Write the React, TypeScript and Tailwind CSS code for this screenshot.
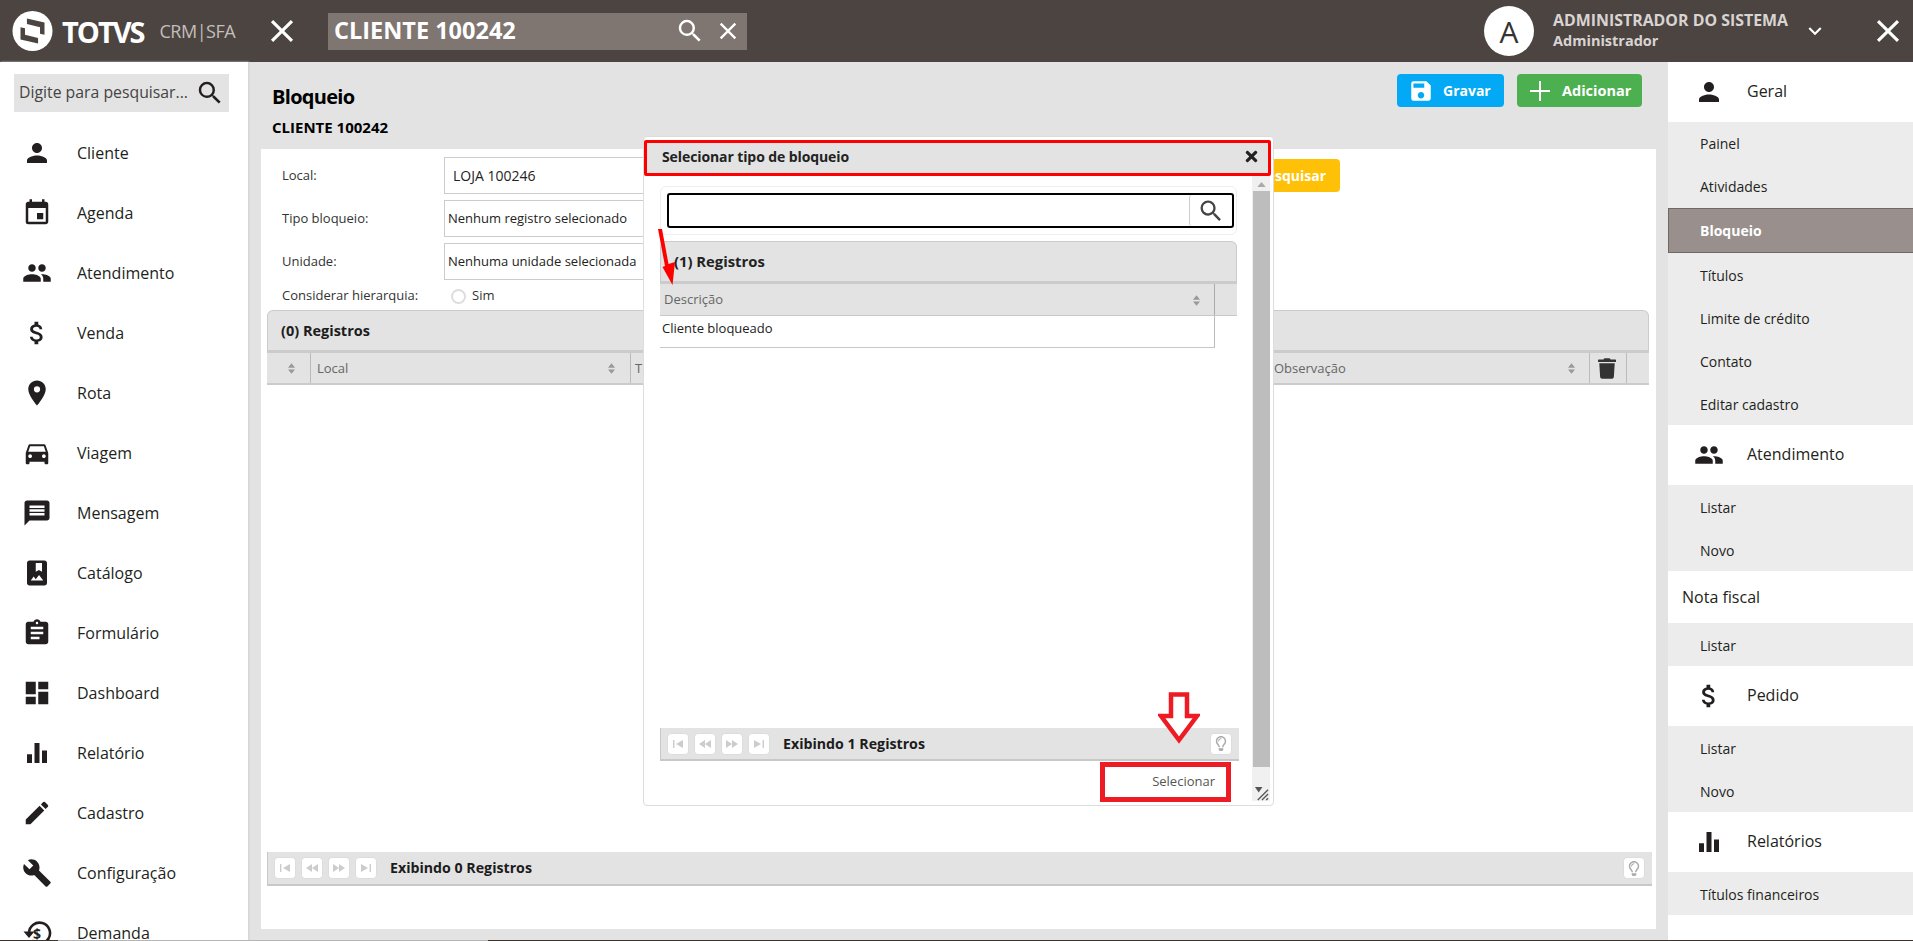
import React from "react";
import {
  MdPerson,
  MdEvent,
  MdPeople,
  MdAttachMoney,
  MdPlace,
  MdDirectionsCar,
  MdMessage,
  MdPhotoAlbum,
  MdAssignment,
  MdDashboard,
  MdEdit,
  MdBuild,
  MdSearch,
  MdClose,
  MdSave,
  MdKeyboardArrowDown,
} from "react-icons/md";
import { FaTimes, FaTrash, FaRegLightbulb } from "react-icons/fa";

function BarsIcon({ className }: { className?: string }) {
  return (
    <svg viewBox="0 0 24 24" className={className} fill="currentColor">
      <path d="M4 13h4v7H4zM10 4h4v16h-4zM16 10h4v10h-4z" />
    </svg>
  );
}

function DemandaIcon({ className }: { className?: string }) {
  return (
    <svg viewBox="0 0 30 30" className={className} fill="none">
      <path d="M7 15a10.5 10.5 0 1 1 3 7.5" stroke="currentColor" strokeWidth="2.6" />
      <path d="M1.5 13.5h11L7 20z" fill="currentColor" />
      <text x="15" y="21" textAnchor="middle" fontSize="14" fontWeight="700" fill="currentColor">$</text>
    </svg>
  );
}

function Logo() {
  return (
    <svg viewBox="0 0 42 42" className="w-[41px] h-[41px] shrink-0">
      <circle cx="21" cy="20.5" r="20.5" fill="#fff" />
      <path d="M15.3 7.7 33.3 11.7V24.3L28.7 23.3V16.7L15.3 13.3Z" fill="#4b4441" />
      <path d="M26.7 33.3 8.7 29.3V16.7L13.3 17.7V24.3L26.7 27.7Z" fill="#4b4441" />
    </svg>
  );
}

function SortIcon() {
  return (
    <svg viewBox="0 0 8 12" className="w-[7px] h-[11px] text-[#999] shrink-0" fill="currentColor">
      <path d="M4 0 8 5H0zM4 12 0 7h8z" />
    </svg>
  );
}

function PagerButton({ d }: { d: string }) {
  return (
    <div className="w-[22px] h-[22px] rounded-[4px] border border-[#ddd] bg-white flex items-center justify-center">
      <svg viewBox="0 0 12 8" className="w-[12px] h-[8px] text-[#ccc]" fill="currentColor">
        <path d={d} />
      </svg>
    </div>
  );
}

function Pager({ count, className }: { count: number; className: string }) {
  return (
    <div className={`flex items-center bg-[#e3e3e3] border-l border-b-2 border-[#c8c8c8] ${className}`}>
      <div className="flex gap-[5px] pl-[6px]">
        <PagerButton d="M1 0h1.4v8H1zM11 0v8L4 4z" />
        <PagerButton d="M6 0v8L0 4zM12 0v8L6 4z" />
        <PagerButton d="M0 0v8l6-4zM6 0v8l6-4z" />
        <PagerButton d="M1 0v8l7-4zM9.6 0H11v8H9.6z" />
      </div>
      <span className="ml-[13px] text-[14.2px] font-bold text-[#1c1c1c]">
        Exibindo {count} Registros
      </span>
      <div className="ml-auto mr-[7px] w-[22px] h-[22px] rounded-[4px] border border-[#ddd] bg-white flex items-center justify-center">
        <FaRegLightbulb className="w-[14px] h-[15px] text-[#aaa]" />
      </div>
    </div>
  );
}

const leftMenu = [
  { label: "Cliente", icon: MdPerson },
  { label: "Agenda", icon: MdEvent },
  { label: "Atendimento", icon: MdPeople },
  { label: "Venda", icon: MdAttachMoney },
  { label: "Rota", icon: MdPlace },
  { label: "Viagem", icon: MdDirectionsCar },
  { label: "Mensagem", icon: MdMessage },
  { label: "Catálogo", icon: MdPhotoAlbum },
  { label: "Formulário", icon: MdAssignment },
  { label: "Dashboard", icon: MdDashboard },
  { label: "Relatório", icon: BarsIcon },
  { label: "Cadastro", icon: MdEdit },
  { label: "Configuração", icon: MdBuild },
  { label: "Demanda", icon: DemandaIcon },
];

function SectionTitle({ label, icon: Icon }: { label: string; icon: React.ElementType }) {
  return (
    <div className="h-[60px] flex items-center bg-white">
      <div className="w-[79px] flex justify-end pr-[23px]">
        <Icon className="w-[30px] h-[30px] text-[#231f20]" />
      </div>
      <span className="pb-[2px] text-[16px] text-[#231f20]">{label}</span>
    </div>
  );
}

function SubItem({ label, active, tight }: { label: string; active?: boolean; tight?: boolean }) {
  if (active) {
    return (
      <div className="h-[45px] flex items-center pl-[31px] bg-[#998f8c] border border-r-0 border-[#6f6764] text-[14px] font-bold text-white">
        {label}
      </div>
    );
  }
  return (
    <div className={`h-[43px] flex items-center pl-[32px] text-[14px] text-[#231f20] bg-[#ececec] ${tight ? "" : "pt-[2px]"}`}>
      {label}
    </div>
  );
}

function FormRow({ label, text, indent }: { label: string; text: string; indent?: boolean }) {
  return (
    <div className="flex items-center h-[37px]">
      <span className="w-[162px] text-[13px] text-[#333]">{label}</span>
      <div className={`w-[736px] h-[37px] border border-[#ccc] flex items-center text-[#222] ${indent ? "pl-[8px] text-[14px]" : "pl-[3px] text-[13px]"}`}>
        {text}
      </div>
    </div>
  );
}

export default function App() {
  return (
    <div className="relative w-[1913px] h-[941px] overflow-hidden bg-[#e3e3e3] font-['Open_Sans',sans-serif] flex flex-col">
      {/* Top bar */}
      <header className="h-[62px] shrink-0 bg-[#4b4441] flex items-center text-white">
        <div className="pl-[12px] flex items-center w-[263px]">
          <Logo />
          <span className="ml-[9px] text-[29px] leading-none font-bold tracking-[-2px]">TOTVS</span>
          <span className="ml-[16px] text-[18px] leading-none text-[#c4bebb] tracking-[-0.5px]">CRM|SFA</span>
        </div>
        <MdClose className="w-[38px] h-[38px]" />
        <div className="ml-[27px] w-[419px] h-[37px] bg-[#7f7571] flex items-center pl-[6px] pr-[5px]">
          <span className="text-[23.5px] font-bold leading-none">CLIENTE 100242</span>
          <MdSearch className="ml-auto w-[30px] h-[30px]" />
          <MdClose className="ml-[9px] w-[28px] h-[28px]" />
        </div>
        <div className="ml-auto flex items-center">
          <div className="w-[50px] h-[50px] rounded-full bg-white flex items-center justify-center text-[#333] text-[30px]">
            A
          </div>
          <div className="ml-[19px] flex flex-col leading-none font-bold text-[#d9d4d2]">
            <span className="text-[15.9px]">ADMINISTRADOR DO SISTEMA</span>
            <span className="mt-[5px] text-[14.5px]">Administrador</span>
          </div>
          <MdKeyboardArrowDown className="ml-[14px] w-[26px] h-[26px]" />
          <MdClose className="ml-[41px] mr-[6px] w-[38px] h-[38px]" />
        </div>
      </header>

      <div className="flex flex-1 min-h-0">
        {/* Left menu */}
        <aside className="w-[248px] shrink-0 bg-white shadow-[1px_0_2px_#d0d0d0] overflow-hidden">
          <div className="mt-[12px] ml-[14px] w-[215px] h-[38px] bg-[#e3e3e3] flex items-center pl-[5px]">
            <span className="text-[15.8px] text-[#444]">Digite para pesquisar...</span>
            <MdSearch className="ml-auto mr-[4px] w-[30px] h-[30px] text-[#231f20]" />
          </div>
          <nav className="mt-[11px]">
            {leftMenu.map((item) => (
              <div key={item.label} className="h-[60px] flex items-center">
                <div className="w-[77px] pl-[22px]">
                  <item.icon className="w-[30px] h-[30px] text-[#231f20]" />
                </div>
                <span className="text-[16px] text-[#231f20]">{item.label}</span>
              </div>
            ))}
          </nav>
        </aside>

        {/* Main */}
        <main className="flex-1 min-w-0 pl-[13px] pr-[12px] flex flex-col">
          <div className="h-[87px] shrink-0 flex items-start">
            <div className="pl-[11px] pt-[20px]">
              <h1 className="text-[20px] leading-[30px] font-bold text-black tracking-[-0.7px]">Bloqueio</h1>
              <div className="mt-[5px] text-[15px] leading-[20px] font-bold text-black">CLIENTE 100242</div>
            </div>
            <div className="ml-auto flex gap-[13px] pt-[12px] pr-[14px]">
              <button className="w-[107px] h-[33px] rounded-[4px] bg-[#03a9f4] text-white text-[14px] font-bold flex items-center pl-[11px]">
                <MdSave className="w-[26px] h-[26px]" />
                <span className="ml-[9px]">Gravar</span>
              </button>
              <button className="w-[125px] h-[33px] rounded-[4px] bg-[#4caf50] text-white text-[14.5px] font-bold flex items-center pl-[13px]">
                <svg viewBox="0 0 20 20" className="w-[20px] h-[20px]" fill="none" stroke="currentColor" strokeWidth="2">
                  <path d="M10 0v20M0 10h20" />
                </svg>
                <span className="ml-[12px]">Adicionar</span>
              </button>
            </div>
          </div>

          <section className="h-[780px] bg-white pt-[8px] px-[6px] shrink-0">
            <div className="pl-[15px] flex items-start">
              <div className="flex flex-col gap-[6px]">
                <FormRow label="Local:" text="LOJA 100246" indent />
                <FormRow label="Tipo bloqueio:" text="Nenhum registro selecionado" />
                <FormRow label="Unidade:" text="Nenhuma unidade selecionada" />
              </div>
              <button className="ml-[20px] mt-[2px] w-[140px] h-[33px] rounded-[4px] bg-[#ffc107] text-white text-[14px] font-bold flex items-center justify-end pr-[14px]">
                Pesquisar
              </button>
            </div>
            <div className="pl-[15px] h-[31px] flex items-center pt-[3px] -mt-[1px]">
              <span className="w-[169px] text-[13px] text-[#333]">Considerar hierarquia:</span>
              <span className="w-[15px] h-[15px] rounded-full border-2 border-[#ddd] bg-white" />
              <span className="ml-[6px] text-[13px] text-[#333]">Sim</span>
            </div>

            {/* Records grid */}
            <div className="w-[1382px]">
              <div className="h-[43px] rounded-t-[6px] bg-[#e3e3e3] border border-b-[3px] border-[#cbcbcb] flex items-center pl-[13px] text-[14.5px] font-bold text-[#1c1c1c]">
                (0) Registros
              </div>
              <div className="h-[32px] bg-[#e3e3e3] border-b-2 border-[#cbcbcb] flex text-[13px] text-[#666]">
                <div className="w-[44px] flex items-center justify-center border-r border-[#bbb] pl-[6px] pt-[1px]">
                  <SortIcon />
                </div>
                <div className="w-[320px] flex items-center justify-between pl-[6px] pr-[15px] pt-[1px] border-r border-[#bbb]">
                  Local
                  <SortIcon />
                </div>
                <div className="w-[637px] flex items-center pl-[4px] pt-[1px] border-r border-[#bbb]">Tipo bloqueio</div>
                <div className="w-[322px] flex items-center justify-between pl-[6px] pr-[14px] pt-[1px] border-r border-[#bbb]">
                  Observação
                  <SortIcon />
                </div>
                <div className="w-[37px] flex items-center justify-center border-r border-[#bbb] pr-[3px]">
                  <FaTrash className="w-[18px] h-[21px] text-[#333]" />
                </div>
              </div>
            </div>
            <Pager count={0} className="mt-[467px] w-[1385px] h-[34px]" />
          </section>
        </main>

        {/* Right menu */}
        <aside className="w-[245px] shrink-0 bg-white overflow-hidden">
          <SectionTitle label="Geral" icon={MdPerson} />
          <SubItem label="Painel" tight />
          <SubItem label="Atividades" tight />
          <SubItem label="Bloqueio" active />
          <SubItem label="Títulos" />
          <SubItem label="Limite de crédito" />
          <SubItem label="Contato" />
          <SubItem label="Editar cadastro" />
          <SectionTitle label="Atendimento" icon={MdPeople} />
          <SubItem label="Listar" />
          <SubItem label="Novo" />
          <div className="h-[52px] flex items-center pl-[14px] text-[16px] text-[#231f20]">Nota fiscal</div>
          <SubItem label="Listar" />
          <SectionTitle label="Pedido" icon={MdAttachMoney} />
          <SubItem label="Listar" />
          <SubItem label="Novo" />
          <SectionTitle label="Relatórios" icon={BarsIcon} />
          <SubItem label="Títulos financeiros" />
        </aside>
      </div>

      {/* Bottom edge */}
      <div className="absolute left-0 right-0 bottom-0 h-px flex">
        <div className="w-[58px] bg-[#3a3431]" />
        <div className="w-[430px] bg-[#b5b5b5]" />
        <div className="flex-1 bg-[#3a3431]" />
      </div>

      {/* Dialog */}
      <div className="absolute left-[643px] top-[136px] w-[631px] h-[670px] bg-white border border-[#ddd] rounded-[4px]">
        <div className="absolute left-[0px] top-[3px] w-[627px] h-[36px] bg-[#e3e3e3] border-[3px] border-[#ff0000] rounded-[2px] flex items-center pl-[15px] pr-[9px] pb-[3px]">
          <span className="text-[14px] font-bold text-[#222] tracking-[-0.1px]">Selecionar tipo de bloqueio</span>
          <FaTimes className="ml-auto w-[15px] h-[17px] text-[#222]" />
        </div>

        {/* Scrollbar */}
        <div className="absolute left-[608px] top-[39px] bottom-[4px] w-[18px] bg-[#f0f0f0] flex flex-col items-center">
          <svg viewBox="0 0 10 6" className="mt-[6px] w-[9px] h-[5px] text-[#aaa]" fill="currentColor">
            <path d="M5 0l5 6H0z" />
          </svg>
          <div className="mt-[4px] w-[17px] h-[576px] bg-[#bdbdbd]" />
          <svg viewBox="0 0 16 16" className="mt-auto w-[15px] h-[15px] text-[#555]" fill="none" stroke="currentColor" strokeWidth="1.4">
            <path d="M15 4 4 15M15 8.5 8.5 15M15 13l-2 2" />
            <path d="M1 1h8L5 7z" fill="currentColor" stroke="none" />
          </svg>
        </div>

        <div className="pt-[49px] pl-[16px] w-[596px]">
          <div className="w-[577px] h-[49px] border border-[#eee] rounded-[6px] flex items-center pl-[6px] pr-[2px]">
            <div className="flex-1 h-[35px] border-2 border-black rounded-[3px] flex justify-end overflow-hidden">
              <div className="w-[43px] bg-white border-l border-[#ccc] rounded-[3px] flex items-center justify-center">
                <MdSearch className="w-[28px] h-[28px] text-[#444]" />
              </div>
            </div>
          </div>
          <div className="mt-[6px] w-[577px] h-[43px] rounded-t-[6px] bg-[#e3e3e3] border border-b-[3px] border-[#cbcbcb] flex items-center pl-[13px] text-[14.8px] font-bold text-[#222]">
            (1) Registros
          </div>
          <div className="w-[577px] h-[32px] bg-[#e3e3e3] border-b border-[#c8c8c8] flex text-[13px] text-[#666]">
            <div className="w-[555px] flex items-center justify-between pl-[4px] pr-[14px] pt-[1px] border-r border-[#aaa]">
              Descrição
              <SortIcon />
            </div>
          </div>
          <div className="w-[555px] h-[32px] border-b border-r border-r-[#bbb] border-r-dotted border-b-[#c8c8c8] text-[13px] leading-[25px] pl-[2px] text-[#222]">
            Cliente bloqueado
          </div>
          <Pager count={1} className="mt-[380px] w-[579px] h-[33px]" />
        </div>

        {/* Selecionar */}
        <div className="absolute left-[456px] top-[625px] w-[131px] h-[40px] border-[5px] border-[#ed1c24] flex items-center justify-end pr-[11px] text-[13px] text-[#555]">
          Selecionar
        </div>
      </div>

      {/* Red annotation arrows */}
      <svg viewBox="0 0 20 58" className="absolute left-[657px] top-[229px] w-[20px] h-[58px]" fill="#ff0000">
        <path d="M1 0 L5 0 L11.5 35 L18 33 L15.5 56 L5.5 38 L8 37 Z" />
      </svg>
      <svg viewBox="0 0 42 52" className="absolute left-[1158px] top-[692px] w-[42px] h-[52px]" fill="#fff" stroke="#ed1c24" strokeWidth="4.5">
        <path d="M13 2.5 H29 V24 H39 L21 48 L3 24 H13 Z" />
      </svg>
    </div>
  );
}
